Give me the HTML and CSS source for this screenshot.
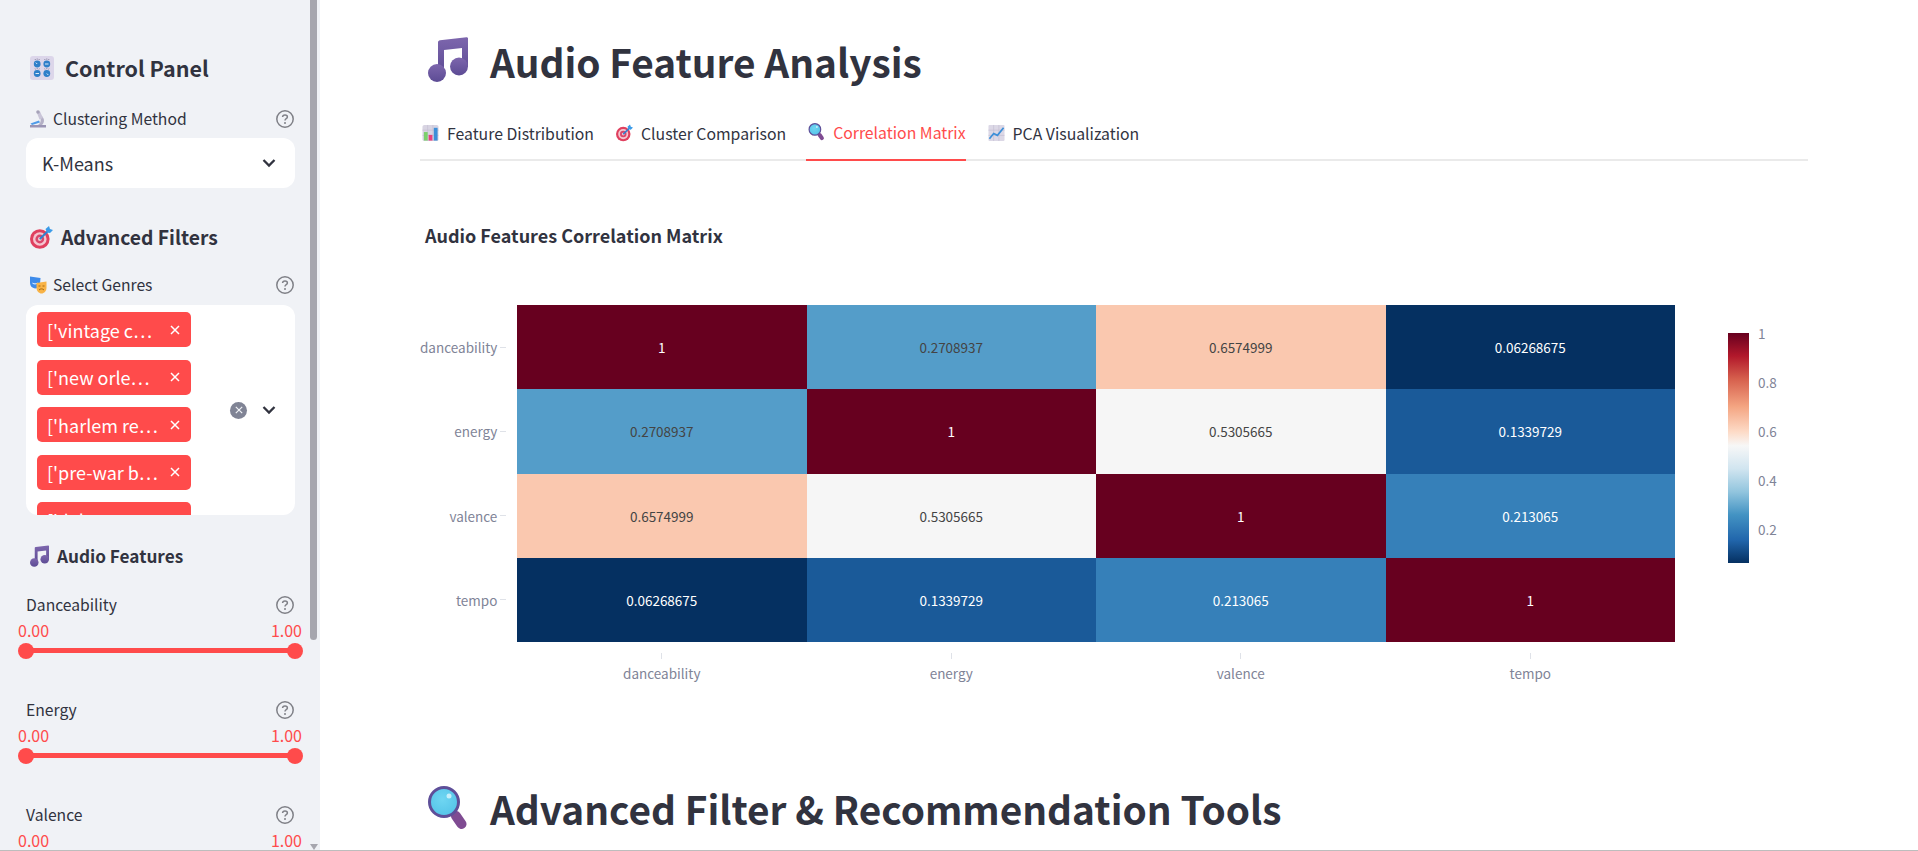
FILE: index.html
```html
<!DOCTYPE html>
<html lang="en">
<head>
    <meta charset="UTF-8">
    <meta name="viewport" content="width=device-width, initial-scale=1.0">
    <title>Audio Feature Analysis</title>
    <link rel="stylesheet" href="styles.css">
</head>
<body>

<svg class="sprites" width="0" height="0">
    <defs>
        <linearGradient id="noteFill" x1="0" y1="0" x2="0" y2="1">
            <stop offset="0" stop-color="#7d66ad"/>
            <stop offset="1" stop-color="#5c4b94"/>
        </linearGradient>
        <radialGradient id="glassFill" cx="0.45" cy="0.4" r="0.6">
            <stop offset="0" stop-color="#6fd6f2"/>
            <stop offset="1" stop-color="#55c4e8"/>
        </radialGradient>
    </defs>
    <symbol id="iconNote" viewBox="0 0 40 45">
        <path d="M12 3.300 L38.500 0.200 C39.300 0.100 40 0.700 40 1.500 L40 30 L34 30 L34 11 L16 13 L16 37 L10 37 L10 5.300 C10 4.200 10.900 3.500 12 3.300 Z" fill="url(#noteFill)"/>
        <circle cx="9" cy="36" r="9" fill="url(#noteFill)"/>
        <circle cx="31" cy="29.500" r="9" fill="url(#noteFill)"/>
    </symbol>
    <symbol id="iconGlass" viewBox="0 0 40 45">
        <path d="M28 30 L33.500 38" stroke="#7f4b92" stroke-width="10" stroke-linecap="round"/>
        <circle cx="16" cy="16" r="14.500" fill="url(#glassFill)" stroke="#5e4f99" stroke-width="3"/>
        <circle cx="21" cy="10" r="2.500" fill="#c6effa"/>
    </symbol>
    <symbol id="iconTarget" viewBox="0 0 23 23">
        <circle cx="9.800" cy="13" r="9.800" fill="#e0405f"/>
        <circle cx="9.800" cy="13" r="6.800" fill="#f4c6d0"/>
        <circle cx="9.800" cy="13" r="4.400" fill="#d9476a"/>
        <circle cx="9.800" cy="13" r="1.900" fill="#f4c6d0"/>
        <path d="M9.800 13 L18 5" stroke="#2f80d0" stroke-width="2"/>
        <path d="M15.500 3 L19 0 L20 3 L23 4 L20 7 L17 6.500 Z" fill="#3b9be8"/>
    </symbol>
    <symbol id="iconHelp" viewBox="0 0 18 18">
        <circle cx="9" cy="9" r="8.200" fill="none" stroke="#7f8087" stroke-width="1.500"/>
        <path d="M6.600 7.100 C6.600 5.700 7.700 4.900 9 4.900 C10.400 4.900 11.400 5.800 11.400 7 C11.400 8.600 9 8.700 9 10.400" fill="none" stroke="#7f8087" stroke-width="1.500"/>
        <circle cx="9" cy="12.900" r="1" fill="#7f8087"/>
    </symbol>
    <symbol id="iconChevron" viewBox="0 0 14 10">
        <path d="M1.500 2 L7 7.500 L12.500 2" fill="none" stroke="#31333f" stroke-width="2.300"/>
    </symbol>
    <symbol id="iconClose" viewBox="0 0 10 10">
        <path d="M1 1 L9 9 M9 1 L1 9" fill="none" stroke="currentColor" stroke-width="1.500"/>
    </symbol>
</svg>

<div class="app">
    <aside class="sidebar">
        <div class="sidebar-scroll">
            <h2 class="side-title">
                <svg class="icon-knobs" viewBox="0 0 24 24">
                    <rect width="24" height="24" rx="3" fill="#dcd6ea"/>
                    <circle cx="7.200" cy="8" r="3.400" fill="#2f7fc9"/>
                    <circle cx="16.800" cy="8" r="3.400" fill="#2f7fc9"/>
                    <circle cx="7.200" cy="17.500" r="3.400" fill="#2f7fc9"/>
                    <circle cx="16.800" cy="17.500" r="3.400" fill="#2f7fc9"/>
                    <path d="M7.200 8 L5.800 6.600 M15 8 L18.500 8 M5.500 17.500 L9 17.500 M16.800 17.500 L18.300 19" stroke="#dcebf7" stroke-width="1"/>
                    <path d="M5 3 L5.500 4 M7.200 2.500 L7.200 3.700 M9.400 3 L8.900 4 M14.600 3 L15.100 4 M16.800 2.500 L16.800 3.700 M19 3 L18.500 4 M5 12.500 L5.500 13.500 M7.200 12 L7.200 13.200 M9.400 12.500 L8.900 13.500 M14.600 12.500 L15.100 13.500 M16.800 12 L16.800 13.200 M19 12.500 L18.500 13.500" stroke="#7f7a99" stroke-width="0.800"/>
                </svg>
                Control Panel
            </h2>

            <div class="field-label method-label">
                <span class="label-text">
                    <svg class="icon-small" viewBox="0 0 18 18">
                        <path d="M1 15 L17 15 L17 17.500 L1 17.500 Z" fill="#9a94b4"/>
                        <path d="M1.500 13.500 L10 10.500 L11 12.500 L3 15 Z" fill="#4f9be8"/>
                        <path d="M12.500 6 C15.500 8 16 12.500 13 15 L9 15 C11.500 13.500 12.500 10 11 7.500 Z" fill="#b4b0c6"/>
                        <path d="M8 3 L11 1.500 L14 8 L10.500 9.500 Z" fill="#c9c5d8"/>
                        <circle cx="9" cy="2" r="1.800" fill="#a5a2b8"/>
                    </svg>
                    Clustering Method
                </span>
                <svg class="icon-help"><use href="#iconHelp"/></svg>
            </div>
            <div class="select-box">
                <span>K-Means</span>
                <svg class="icon-chevron"><use href="#iconChevron"/></svg>
            </div>

            <h2 class="side-title filters-title">
                <svg class="icon-target-big"><use href="#iconTarget"/></svg>
                Advanced Filters
            </h2>

            <div class="field-label genres-label">
                <span class="label-text">
                    <svg class="icon-small" viewBox="0 0 18 18">
                        <path d="M1 0.500 L11.500 2 L11 8 C10.500 11 8.500 12.500 6 12.500 C3 12 1 10 1 7 Z" fill="#3d8bea"/>
                        <path d="M3 6.500 C4 7.500 8 7.500 9 6.500 C8.500 9 3.500 9 3 6.500 Z" fill="#dcecff"/>
                        <path d="M7.500 7 L17.500 5.500 L17.500 12 C17.500 15 15 17.500 12.500 17.500 C10 17.500 7.500 15 7.500 12 Z" fill="#f8b347"/>
                        <path d="M10 14 C11.500 12.500 13.500 12.500 15 14" stroke="#a8690f" stroke-width="1" fill="none"/>
                        <path d="M9.500 10 L11.500 10 M13.500 10 L15.500 10" stroke="#a8690f" stroke-width="1"/>
                    </svg>
                    Select Genres
                </span>
                <svg class="icon-help"><use href="#iconHelp"/></svg>
            </div>
            <div class="multi-box">
                <div class="tag-list">
                    <span class="tag"><span class="tag-text">['vintage c…</span><svg class="icon-close"><use href="#iconClose"/></svg></span>
                    <span class="tag"><span class="tag-text">['new orle…</span><svg class="icon-close"><use href="#iconClose"/></svg></span>
                    <span class="tag"><span class="tag-text">['harlem re…</span><svg class="icon-close"><use href="#iconClose"/></svg></span>
                    <span class="tag"><span class="tag-text">['pre-war b…</span><svg class="icon-close"><use href="#iconClose"/></svg></span>
                    <span class="tag"><span class="tag-text">['delta…</span><svg class="icon-close"><use href="#iconClose"/></svg></span>
                </div>
                <div class="multi-controls">
                    <span class="clear-all"><svg class="icon-close"><use href="#iconClose"/></svg></span>
                    <svg class="icon-chevron"><use href="#iconChevron"/></svg>
                </div>
            </div>

            <h3 class="side-subtitle">
                <svg class="icon-note-small"><use href="#iconNote"/></svg>
                Audio Features
            </h3>

            <div class="slider-block">
                <div class="field-label slider-label">
                    <span class="label-text">Danceability</span>
                    <svg class="icon-help"><use href="#iconHelp"/></svg>
                </div>
                <div class="slider-values"><span>0.00</span><span>1.00</span></div>
                <div class="slider-track"><i class="thumb"></i><i class="thumb"></i></div>
            </div>
            <div class="slider-block">
                <div class="field-label slider-label">
                    <span class="label-text">Energy</span>
                    <svg class="icon-help"><use href="#iconHelp"/></svg>
                </div>
                <div class="slider-values"><span>0.00</span><span>1.00</span></div>
                <div class="slider-track"><i class="thumb"></i><i class="thumb"></i></div>
            </div>
            <div class="slider-block">
                <div class="field-label slider-label">
                    <span class="label-text">Valence</span>
                    <svg class="icon-help"><use href="#iconHelp"/></svg>
                </div>
                <div class="slider-values"><span>0.00</span><span>1.00</span></div>
                <div class="slider-track"><i class="thumb"></i><i class="thumb"></i></div>
            </div>
        </div>
        <div class="scrollbar">
            <div class="scroll-thumb"></div>
            <div class="scroll-arrow"></div>
        </div>
    </aside>

    <main class="content">
        <h1 class="page-title main-title">
            <svg class="icon-title"><use href="#iconNote"/></svg>
            Audio Feature Analysis
        </h1>

        <div class="tabs">
            <div class="tab">
                <svg class="icon-tab" viewBox="0 0 18 18">
                    <rect x="0.500" y="0.500" width="17" height="17" rx="2" fill="#d8d4e2"/>
                    <path d="M0.500 6 L17.500 6 M0.500 11.500 L17.500 11.500 M6 0.500 L6 17.500 M11.500 0.500 L11.500 17.500" stroke="#c3bdd2" stroke-width="0.700"/>
                    <rect x="2" y="8" width="4" height="9" fill="#7bd06b"/>
                    <rect x="7" y="11" width="4" height="6" fill="#e8407c"/>
                    <rect x="12.500" y="3.500" width="4" height="13.500" fill="#3c8fd8"/>
                </svg>
                Feature Distribution
            </div>
            <div class="tab">
                <svg class="icon-tab"><use href="#iconTarget"/></svg>
                Cluster Comparison
            </div>
            <div class="tab tab-active">
                <svg class="icon-tab"><use href="#iconGlass"/></svg>
                Correlation Matrix
            </div>
            <div class="tab">
                <svg class="icon-tab" viewBox="0 0 18 18">
                    <rect x="0.500" y="0.500" width="17" height="17" rx="1" fill="#dcd8e6"/>
                    <path d="M0.500 6 L17.500 6 M0.500 11.500 L17.500 11.500 M6 0.500 L6 17.500 M11.500 0.500 L11.500 17.500" stroke="#c3bdd2" stroke-width="0.700"/>
                    <path d="M1.500 15 L6 9.500 L10 11.500 L16.500 3.500" fill="none" stroke="#3c8fd8" stroke-width="1.800"/>
                </svg>
                PCA Visualization
            </div>
        </div>

        <h4 class="chart-title">Audio Features Correlation Matrix</h4>

        <div class="heatmap">
            <div class="y-axis">
                <span class="y-label">danceability</span>
                <span class="y-label">energy</span>
                <span class="y-label">valence</span>
                <span class="y-label">tempo</span>
            </div>
            <div class="cells">
                <div class="cell c-100">1</div>
                <div class="cell c-027">0.2708937</div>
                <div class="cell c-066">0.6574999</div>
                <div class="cell c-006">0.06268675</div>

                <div class="cell c-027">0.2708937</div>
                <div class="cell c-100">1</div>
                <div class="cell c-053">0.5305665</div>
                <div class="cell c-013">0.1339729</div>

                <div class="cell c-066">0.6574999</div>
                <div class="cell c-053">0.5305665</div>
                <div class="cell c-100">1</div>
                <div class="cell c-021">0.213065</div>

                <div class="cell c-006">0.06268675</div>
                <div class="cell c-013">0.1339729</div>
                <div class="cell c-021">0.213065</div>
                <div class="cell c-100">1</div>
            </div>
            <div class="colorbar">
                <div class="colorbar-ramp"></div>
                <div class="colorbar-ticks">
                    <span>1</span>
                    <span>0.8</span>
                    <span>0.6</span>
                    <span>0.4</span>
                    <span>0.2</span>
                </div>
            </div>
            <div class="x-axis">
                <span class="x-label">danceability</span>
                <span class="x-label">energy</span>
                <span class="x-label">valence</span>
                <span class="x-label">tempo</span>
            </div>
        </div>

        <h1 class="page-title tools-title">
            <svg class="icon-title"><use href="#iconGlass"/></svg>
            Advanced Filter &amp; Recommendation Tools
        </h1>
    </main>
</div>

</body>
</html>
```

FILE: styles.css
```css
html, body {
    margin: 0;
    height: 100%;
    overflow: hidden;
}
body {
    font-family: "Noto Sans CJK SC", "Noto Sans", sans-serif;
    color: #31333f;
    background: white;
}
.sprites {
    display: block;
    height: 0;
}
.app {
    display: flex;
    height: 851px;
    box-sizing: border-box;
    border-bottom: 1px solid #bdbdbd;
    overflow: hidden;
}

/* sidebar */
.sidebar {
    flex: 0 0 320px;
    display: flex;
    background-color: #f0f2f6;
    overflow: hidden;
}
.sidebar-scroll {
    flex: 0 0 310px;
    box-sizing: border-box;
    padding: 56px 15px 0 26px;
}
.scrollbar {
    flex: 0 0 8px;
    position: relative;
    height: 850px;
}
.scroll-thumb {
    width: 7px;
    height: 640px;
    background-color: #a6a6ae;
    border-radius: 0 0 4px 4px;
}
.scroll-arrow {
    position: absolute;
    left: 0;
    bottom: 0;
    width: 0;
    height: 0;
    border-left: 4px solid transparent;
    border-right: 4px solid transparent;
    border-top: 6px solid #a6a6ae;
}
.side-title {
    display: flex;
    align-items: center;
    gap: 11px;
    margin: 0 0 0 4px;
    height: 24px;
    font-size: 21.5px;
    line-height: 24px;
    font-weight: 600;
}
.filters-title {
    gap: 8px;
    margin-top: 37px;
    font-size: 19.3px;
}
.icon-knobs {
    width: 24px;
    height: 24px;
}
.icon-target-big {
    width: 23px;
    height: 23px;
}
.field-label {
    display: flex;
    justify-content: space-between;
    align-items: center;
    height: 20px;
    font-size: 15.7px;
    line-height: 20px;
}
.method-label {
    margin-top: 29px;
}
.genres-label {
    margin-top: 26px;
}
.label-text {
    display: flex;
    align-items: center;
    gap: 6px;
    margin-left: 3px;
}
.icon-small {
    width: 18px;
    height: 18px;
}
.icon-help {
    width: 18px;
    height: 18px;
    margin-right: 1px;
}
.select-box {
    display: flex;
    justify-content: space-between;
    align-items: center;
    height: 50px;
    margin-top: 9px;
    padding: 0 19px 0 16px;
    background: white;
    border-radius: 12px;
    font-size: 18px;
}
.genres-label + .multi-box {
    margin-top: 10px;
}
.icon-chevron {
    width: 14px;
    height: 10px;
}
.multi-box {
    display: flex;
    height: 210px;
    padding-left: 11px;
    padding-right: 19px;
    background: white;
    border-radius: 12px;
    overflow: hidden;
}
.tag-list {
    flex: 1;
    padding-top: 7px;
}
.tag {
    display: flex;
    justify-content: space-between;
    align-items: center;
    box-sizing: border-box;
    width: 154px;
    height: 35px;
    margin-bottom: 12.5px;
    padding: 0 11px 0 10px;
    background-color: #ff4b4b;
    border-radius: 5px;
    color: white;
    font-size: 18px;
    white-space: nowrap;
}
.icon-close {
    width: 10px;
    height: 10px;
}
.multi-controls {
    display: flex;
    align-items: center;
    gap: 15px;
}
.clear-all {
    display: flex;
    align-items: center;
    justify-content: center;
    width: 17px;
    height: 17px;
    border-radius: 50%;
    background-color: #808495;
    color: #f0f2f6;
}
.clear-all .icon-close {
    width: 8px;
    height: 8px;
}
.side-subtitle {
    display: flex;
    align-items: center;
    gap: 8px;
    height: 24px;
    margin: 29px 0 0 4px;
    font-size: 17.2px;
    line-height: 24px;
    font-weight: 600;
}
.icon-note-small {
    width: 19px;
    height: 22px;
}
.slider-block {
    box-sizing: border-box;
    height: 105px;
    padding-top: 27px;
}
.slider-label .label-text {
    margin-left: 0;
}
.slider-values {
    display: flex;
    justify-content: space-between;
    margin: 3px -7px 0 -8px;
    color: #ff4b4b;
    font-size: 16px;
    line-height: 24px;
}
.slider-track {
    display: flex;
    justify-content: space-between;
    align-items: center;
    height: 5px;
    margin-top: 6px;
    background-color: #ff4b4b;
}
.thumb {
    width: 16px;
    height: 16px;
    margin: 0 -8px;
    border-radius: 50%;
    background-color: #ff4b4b;
}

/* main column */
.content {
    flex: 1;
    padding: 0 110px 0 100px;
}
.page-title {
    display: flex;
    align-items: center;
    gap: 22px;
    height: 56px;
    margin: 33px 0 0 8px;
    font-size: 38.8px;
    line-height: 56px;
    font-weight: 600;
    white-space: nowrap;
}
.icon-title {
    width: 40px;
    height: 45px;
}
.main-title .icon-title {
    margin-bottom: 4px;
}
.tools-title {
    margin-top: 97px;
}
.tabs {
    display: flex;
    gap: 20px;
    height: 39px;
    margin-top: 31px;
    border-bottom: 2px solid #eaeaea;
}
.tab {
    display: flex;
    align-items: center;
    gap: 8px;
    height: 41px;
    box-sizing: border-box;
    padding: 0 0 15px 2px;
    font-size: 15.8px;
}
.tab-active {
    color: #ff4b4b;
    border-bottom: 2px solid #ff4b4b;
}
.icon-tab {
    width: 17px;
    height: 18px;
}
.chart-title {
    margin: 62px 0 0 5px;
    font-size: 18px;
    line-height: 24px;
    font-weight: 700;
}

/* heatmap */
.heatmap {
    display: grid;
    grid-template-columns: 97px 1158px auto;
    grid-template-rows: 337px auto;
    margin-top: 58px;
    color: #7f8497;
    font-size: 13.5px;
}
.y-axis {
    display: grid;
    grid-template-rows: repeat(4, 1fr);
}
.y-label {
    display: flex;
    justify-content: flex-end;
    align-items: center;
    gap: 3px;
    padding-right: 11px;
}
.y-label::after {
    content: "";
    width: 6px;
    height: 1px;
    background-color: #dfe2e8;
}
.cells {
    display: grid;
    grid-template-columns: repeat(4, 1fr);
    grid-template-rows: repeat(4, 1fr);
    font-size: 13.5px;
    color: #444444;
}
.cell {
    display: flex;
    align-items: center;
    justify-content: center;
}
.c-100 { background-color: #67001f; color: white; }
.c-027 { background-color: #549dc9; }
.c-066 { background-color: #fac8af; }
.c-053 { background-color: #f6f6f6; }
.c-021 { background-color: #3680b9; color: white; }
.c-013 { background-color: #1a5a99; color: white; }
.c-006 { background-color: #053061; color: white; }
.colorbar {
    display: flex;
    gap: 9px;
    align-self: start;
    margin: 28px 0 0 53px;
}
.colorbar-ramp {
    width: 21px;
    height: 230px;
    background: linear-gradient(to bottom, #67001f, #b2182b 10%, #d6604d 20%, #f4a582 32%, #fddbc7 43%, #f7f7f7 49%, #d1e5f0 59%, #92c5de 69%, #4393c3 79%, #2166ac 90%, #053061);
}
.colorbar-ticks {
    display: flex;
    flex-direction: column;
    gap: 31px;
    margin-top: -9px;
    line-height: 18px;
}
.x-axis {
    grid-column: 2;
    display: grid;
    grid-template-columns: repeat(4, 1fr);
}
.x-label {
    display: flex;
    flex-direction: column;
    align-items: center;
    gap: 4px;
    padding-top: 11px;
}
.x-label::before {
    content: "";
    width: 1px;
    height: 6px;
    background-color: #dfe2e8;
}
```
